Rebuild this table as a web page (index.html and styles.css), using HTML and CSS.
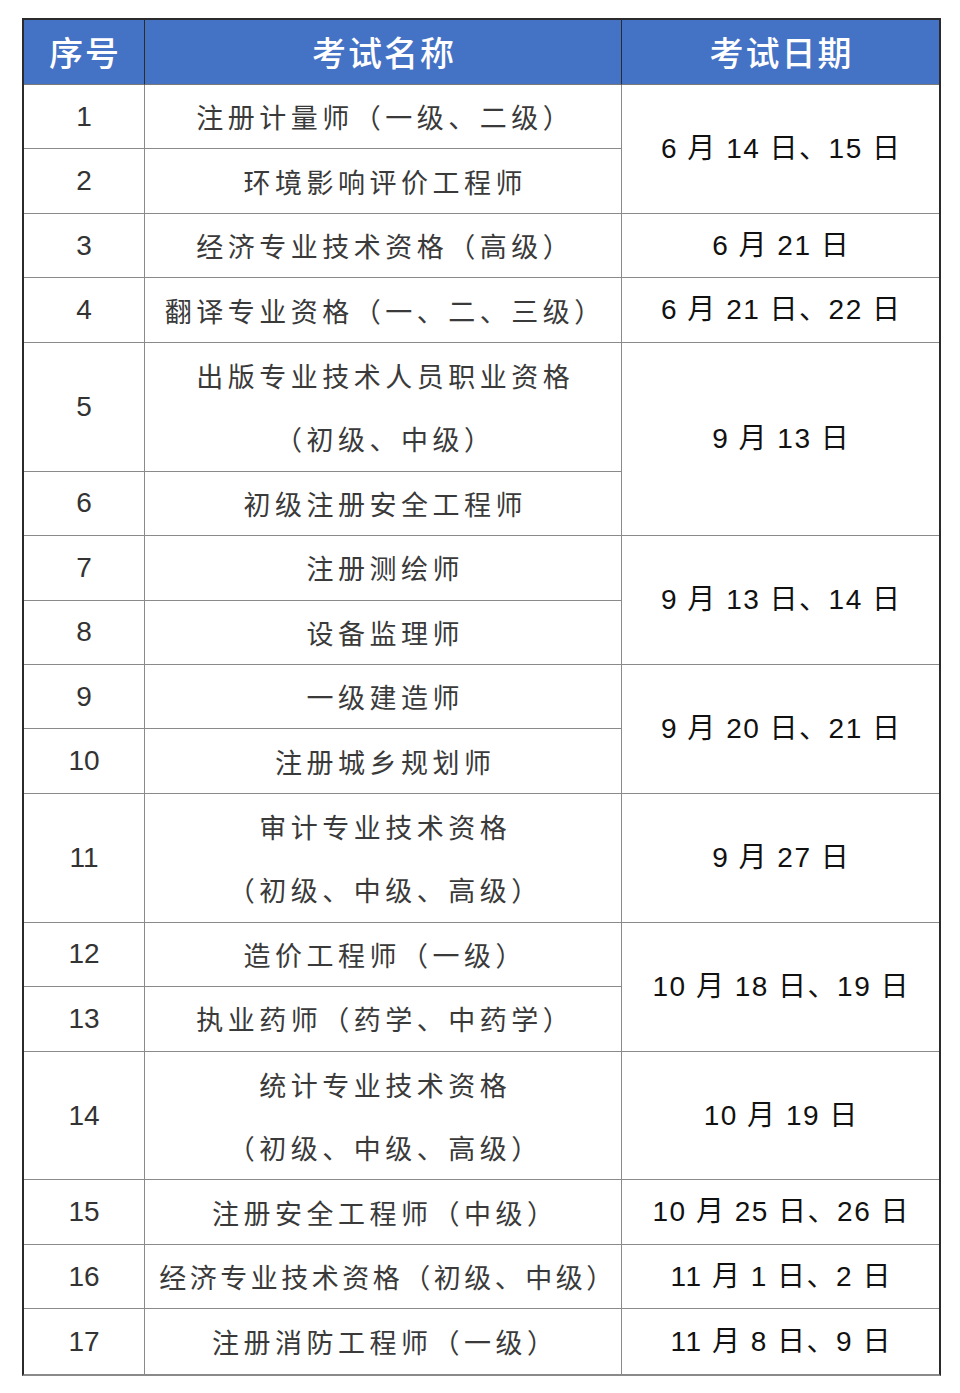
FILE: index.html
```html
<!DOCTYPE html>
<html lang="zh-CN">
<head>
<meta charset="utf-8">
<title>2025年专业技术人员职业资格考试日期</title>
<link rel="stylesheet" href="styles.css">
</head>
<body>
<div class="page">
<table class="exam">
  <colgroup>
    <col class="c-no">
    <col class="c-name">
    <col class="c-date">
  </colgroup>
  <thead>
    <tr class="head">
      <th class="th">序号</th>
      <th class="th">考试名称</th>
      <th class="th last">考试日期</th>
    </tr>
  </thead>
  <tbody>
    <tr class="r1">
      <td class="no">1</td>
      <td class="name">注册计量师（一级、二级）</td>
      <td class="date" rowspan="2">6 月 14 日、15 日</td>
    </tr>
    <tr class="r1">
      <td class="no">2</td>
      <td class="name">环境影响评价工程师</td>
    </tr>
    <tr class="r1">
      <td class="no">3</td>
      <td class="name">经济专业技术资格（高级）</td>
      <td class="date">6 月 21 日</td>
    </tr>
    <tr class="r1">
      <td class="no">4</td>
      <td class="name">翻译专业资格（一、二、三级）</td>
      <td class="date">6 月 21 日、22 日</td>
    </tr>
    <tr class="r2">
      <td class="no">5</td>
      <td class="name">出版专业技术人员职业资格<br>（初级、中级）</td>
      <td class="date" rowspan="2">9 月 13 日</td>
    </tr>
    <tr class="r1">
      <td class="no">6</td>
      <td class="name">初级注册安全工程师</td>
    </tr>
    <tr class="r1">
      <td class="no">7</td>
      <td class="name">注册测绘师</td>
      <td class="date" rowspan="2">9 月 13 日、14 日</td>
    </tr>
    <tr class="r1">
      <td class="no">8</td>
      <td class="name">设备监理师</td>
    </tr>
    <tr class="r1">
      <td class="no">9</td>
      <td class="name">一级建造师</td>
      <td class="date" rowspan="2">9 月 20 日、21 日</td>
    </tr>
    <tr class="r1">
      <td class="no">10</td>
      <td class="name">注册城乡规划师</td>
    </tr>
    <tr class="r2">
      <td class="no">11</td>
      <td class="name">审计专业技术资格<br>（初级、中级、高级）</td>
      <td class="date">9 月 27 日</td>
    </tr>
    <tr class="r1">
      <td class="no">12</td>
      <td class="name">造价工程师（一级）</td>
      <td class="date" rowspan="2">10 月 18 日、19 日</td>
    </tr>
    <tr class="r1">
      <td class="no">13</td>
      <td class="name">执业药师（药学、中药学）</td>
    </tr>
    <tr class="r2">
      <td class="no">14</td>
      <td class="name">统计专业技术资格<br>（初级、中级、高级）</td>
      <td class="date">10 月 19 日</td>
    </tr>
    <tr class="r1">
      <td class="no">15</td>
      <td class="name">注册安全工程师（中级）</td>
      <td class="date">10 月 25 日、26 日</td>
    </tr>
    <tr class="r1">
      <td class="no">16</td>
      <td class="name tight">经济专业技术资格（初级、中级）</td>
      <td class="date">11 月 1 日、2 日</td>
    </tr>
    <tr class="r1 end">
      <td class="no">17</td>
      <td class="name">注册消防工程师（一级）</td>
      <td class="date">11 月 8 日、9 日</td>
    </tr>
  </tbody>
</table>
</div>
</body>
</html>
```
FILE: styles.css
```css
html, body {
  margin: 0;
  padding: 0;
  background: #ffffff;
}

.page {
  padding: 18px 0 0 22px;
}

.exam {
  width: 919px;
  table-layout: fixed;
  border-collapse: separate;
  border-spacing: 0;
  border-top: 2px solid #2b2b2b;
  border-left: 2px solid #2b2b2b;
  border-right: 2px solid #2b2b2b;
  border-bottom: 2px solid #8a8a8a;
  font-family: "Liberation Sans", "Noto Sans CJK SC", sans-serif;
}

.c-no { width: 121px; }
.c-name { width: 477px; }
.c-date { width: auto; }

.head {
  height: 65px;
}

.th {
  background: #4472c4;
  color: #ffffff;
  font-family: "Noto Sans CJK SC", sans-serif;
  font-weight: 500;
  font-size: 34px;
  line-height: 40px;
  letter-spacing: 2px;
  padding: 0 0 0 2px;
  text-align: center;
  vertical-align: middle;
  border-right: 1px solid #2b2b2b;
  border-bottom: 1px solid #7a7a7a;
}

.th.last {
  border-right: none;
}

.r1 { height: 64.45px; }
.r2 { height: 128.9px; }

td {
  padding: 0;
  text-align: center;
  vertical-align: middle;
  border-right: 1px solid #8a8a8a;
  border-bottom: 1px solid #8a8a8a;
  white-space: nowrap;
  line-height: 40px;
}

.end td {
  border-bottom: none;
}

.no {
  font-family: "Liberation Sans", sans-serif;
  font-size: 28px;
  color: #333333;
}

.name {
  font-family: "Noto Sans CJK SC", sans-serif;
  font-size: 27px;
  line-height: 63px;
  letter-spacing: 4.5px;
  padding-left: 4.5px;
  color: #3a3a3a;
}

.name.tight {
  letter-spacing: 3.5px;
  padding-left: 10px;
}

.date {
  font-family: "Liberation Sans", "Noto Sans CJK SC", sans-serif;
  font-size: 28px;
  letter-spacing: 1.5px;
  padding-left: 1.5px;
  color: #111111;
  border-right: none;
}
```
